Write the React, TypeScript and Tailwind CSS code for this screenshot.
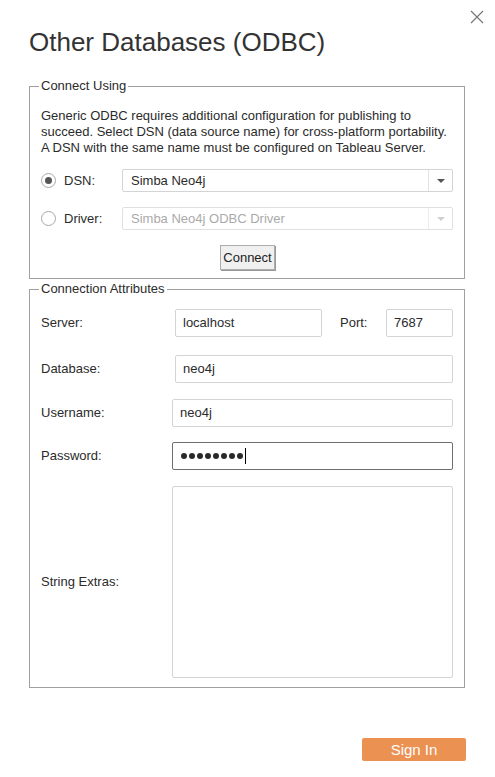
import React from 'react';

const font = { fontFamily: '"Liberation Sans", Arial, sans-serif' };

const Caret: React.FC<{ muted?: boolean }> = ({ muted }) => (
    <svg width="8" height="4" viewBox="0 0 8 4">
        <path d="M0 0 H8 L4 4 Z" fill={muted ? '#d0d0d0' : '#555'} />
    </svg>
);

const Radio: React.FC<{ checked?: boolean }> = ({ checked }) => (
    <span className="w-[15px] h-[15px] rounded-full border border-[#a8a8a8] flex items-center justify-center bg-white">
        {checked && <span className="w-[7px] h-[7px] rounded-full bg-[#555]" />}
    </span>
);

const App: React.FC = () => {
    return (
        <div style={font} className="relative w-[495px] h-[777px] bg-white text-[#2b2b2b] text-[13px]">
            <button className="absolute left-[470px] top-[10px] w-[14px] h-[14px]">
                <svg width="14" height="14" viewBox="0 0 14 14">
                    <path d="M1 1 L13 13 M13 1 L1 13" stroke="#777" strokeWidth="1.2" />
                </svg>
            </button>

            <h1 className="pt-[26px] pl-[29px] text-[26px] leading-[33px] text-[#333]">Other Databases (ODBC)</h1>

            {/* Connect Using */}
            <fieldset className="ml-[29px] mt-[19px] w-[436px] h-[201px] border border-[#a0a0a0] pl-[11px] pr-[11px]">
                <legend className="ml-[-2px] px-[2px] leading-[16px]">Connect Using</legend>
                <p className="mt-[14px] leading-[16px]">
                    Generic ODBC requires additional configuration for publishing to succeed. Select DSN (data source name) for cross-platform portability. A DSN with the same name must be configured on Tableau Server.
                </p>
                <div className="mt-[13px] flex items-center h-[23px]">
                    <Radio checked />
                    <span className="ml-[8px] w-[58px]">DSN:</span>
                    <div className="flex-1 h-[23px] border border-[#d4d4d4] rounded-[2px] flex items-center">
                        <span className="flex-1 pl-[8px]">Simba Neo4j</span>
                        <span className="w-[24px] h-full border-l border-[#e2e2e2] flex items-center justify-center"><Caret /></span>
                    </div>
                </div>
                <div className="mt-[15px] flex items-center h-[23px]">
                    <Radio />
                    <span className="ml-[8px] w-[58px]">Driver:</span>
                    <div className="flex-1 h-[23px] border border-[#e0e0e0] rounded-[2px] flex items-center">
                        <span className="flex-1 pl-[8px] text-[#aaa]">Simba Neo4j ODBC Driver</span>
                        <span className="w-[24px] h-full border-l border-[#ececec] flex items-center justify-center"><Caret muted /></span>
                    </div>
                </div>
                <div className="mt-[15px] flex pl-[179px]">
                    <button className="h-[25px] w-[55px] bg-[#f0f0f0] border border-[#adadad] shadow-[1px_1px_0_#999] leading-[23px] text-[#222]">Connect</button>
                </div>
            </fieldset>

            {/* Connection Attributes */}
            <fieldset className="ml-[29px] mt-[2px] w-[436px] h-[407px] border border-[#a0a0a0] pl-[11px] pr-[11px]">
                <legend className="ml-[-2px] px-[2px] leading-[16px]">Connection Attributes</legend>
                <div className="mt-[12px] flex items-center h-[28px]">
                    <span className="w-[134px]">Server:</span>
                    <div className="w-[147px] h-[28px] border border-[#d4d4d4] rounded-[2px] pl-[7px] flex items-center">localhost</div>
                    <span className="ml-[18px] w-[46px]">Port:</span>
                    <div className="flex-1 h-[28px] border border-[#d4d4d4] rounded-[2px] pl-[7px] flex items-center">7687</div>
                </div>
                <div className="mt-[18px] flex items-center h-[28px]">
                    <span className="w-[134px]">Database:</span>
                    <div className="flex-1 h-[28px] border border-[#d4d4d4] rounded-[2px] pl-[7px] flex items-center">neo4j</div>
                </div>
                <div className="mt-[16px] flex items-center h-[28px]">
                    <span className="w-[131px]">Username:</span>
                    <div className="flex-1 h-[28px] border border-[#d4d4d4] rounded-[2px] pl-[7px] flex items-center">neo4j</div>
                </div>
                <div className="mt-[15px] flex items-center h-[28px]">
                    <span className="w-[131px]">Password:</span>
                    <div className="flex-1 h-[28px] border border-[#6e6e6e] rounded-[2px] pl-[8px] flex items-center gap-[2px]">
                        {Array.from({ length: 8 }).map((_, i) => (
                            <span key={i} className="w-[6px] h-[6px] rounded-full bg-[#2a2a2a]" />
                        ))}
                        <span className="w-px h-[16px] bg-black" />
                    </div>
                </div>
                <div className="mt-[16px] flex items-center">
                    <span className="w-[131px]">String Extras:</span>
                    <div className="flex-1 h-[192px] border border-[#d4d4d4] rounded-[2px]" />
                </div>
            </fieldset>

            <div className="flex justify-end pr-[29px] mt-[50px]">
                <button className="w-[104px] h-[23px] rounded-[2px] bg-[#eb9152] text-white text-[15px] leading-[23px]">Sign In</button>
            </div>
        </div>
    );
};

export default App;
